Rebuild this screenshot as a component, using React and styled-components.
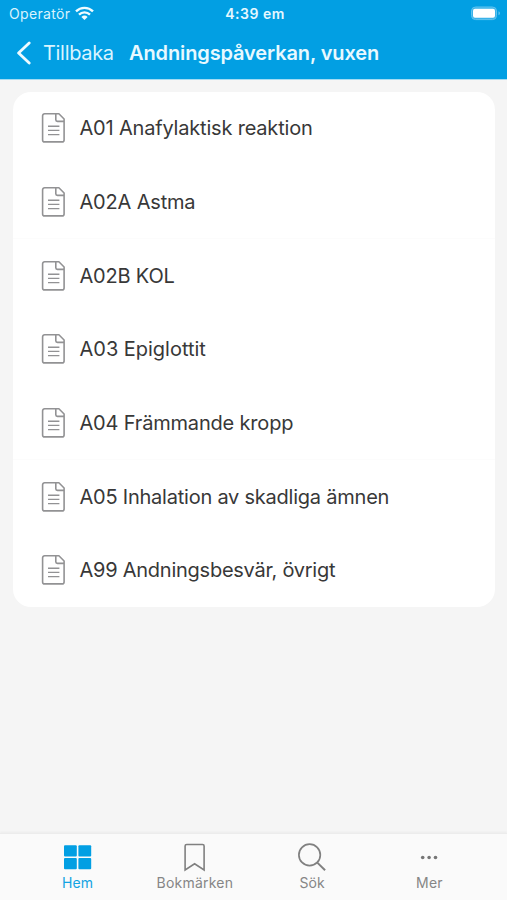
import React from 'react';
import styled, { createGlobalStyle } from 'styled-components';

const GlobalStyle = createGlobalStyle`
  * { box-sizing: border-box; }
  body { margin: 0; background: #f5f5f5; }
`;

const Screen = styled.div`
  width: 507px;
  height: 900px;
  display: flex;
  flex-direction: column;
  background: #f5f5f5;
  font-family: Inter, 'Liberation Sans', sans-serif;
  overflow: hidden;
`;

const Header = styled.header`
  height: 80px;
  flex: none;
  background: #029fe3;
  border-bottom: 1px solid #a5dcf3;
`;

const StatusBar = styled.div`
  height: 27px;
  display: grid;
  grid-template-columns: 1fr auto 1fr;
  align-items: center;
  padding: 0 6px 0 9px;
`;

const Carrier = styled.div`
  display: flex;
  align-items: center;
  gap: 5px;
  font-size: 14px;
  letter-spacing: 0.35px;
  color: #d9f3fd;
`;

const Clock = styled.div`
  font-size: 14px;
  font-weight: 600;
  letter-spacing: 0.5px;
  color: #e6f8ff;
`;

const Battery = styled.div`
  display: flex;
  justify-content: flex-end;
`;

const NavBar = styled.div`
  height: 51px;
  display: flex;
  align-items: center;
  padding-left: 16px;
`;

const BackButton = styled.button`
  display: flex;
  align-items: center;
  gap: 12px;
  width: 113px;
  padding: 0;
  border: 0;
  background: none;
  font: inherit;
  font-size: 20px;
  letter-spacing: ${(p) => p.$tracking}px;
  color: #d9f4ff;
  white-space: nowrap;
`;

const Title = styled.h1`
  margin: 0;
  font-size: 20px;
  font-weight: 600;
  letter-spacing: ${(p) => p.$tracking}px;
  color: #e8f9ff;
  white-space: nowrap;
`;

const Content = styled.main`
  flex: 1;
  padding: 12px 12.5px 0 13px;
`;

const Card = styled.ul`
  margin: 0;
  padding: 0;
  list-style: none;
  height: 514.5px;
  border-radius: 18px;
  background: #fff;
  overflow: hidden;
`;

const Row = styled.li`
  height: 73.67px;
  display: flex;
  align-items: center;
  gap: 13.5px;
  padding: 0 0 1px 28px;
  font-size: 20px;
  letter-spacing: ${(p) => p.$tracking}px;
  color: #383838;
  white-space: nowrap;
  box-shadow: ${(p) => (p.$divided ? 'inset 0 -1px #fcfcfc' : 'none')};
`;

const TabBar = styled.nav`
  height: 67px;
  flex: none;
  display: flex;
  justify-content: center;
  padding: 0 19px;
  background: #fafafa;
  border-top: 1px solid #ececec;
  box-shadow: 0 -1px 2px rgba(0, 0, 0, 0.04);
`;

const Tab = styled.div`
  width: 117.4px;
  display: flex;
  flex-direction: column;
  align-items: center;
  padding-top: 8px;
  font-size: 14px;
  line-height: 17px;
  letter-spacing: ${(p) => p.$tracking}px;
  color: ${(p) => (p.$active ? '#12a3e3' : '#868686')};
`;

const TabIcon = styled.svg`
  width: 32px;
  height: 32px;
  flex: none;
`;

const DocumentIcon = () => (
  <svg width="25" height="32" viewBox="0 0 25 32" fill="none" stroke="#929294" strokeWidth="1.6" strokeLinejoin="round">
    <path d="M3.6 1.8h14.3l5.2 5.2v20.9a2 2 0 0 1-2 2H3.6a2 2 0 0 1-2-2V3.8a2 2 0 0 1 2-2Z" />
    <path d="M14.8 2v5.8a1.6 1.6 0 0 0 1.6 1.6h6.6" />
    <path d="M7 14.2h11.4M7 18.4h11.4M7 22.6h11.4" strokeWidth="1.4" />
  </svg>
);

const WifiIcon = () => (
  <svg width="19" height="15" viewBox="0 0 19 15" fill="none" stroke="#effbff" strokeWidth="2.4">
    <path d="M1 5.3a12.2 12.2 0 0 1 17 0" />
    <path d="M4 8.6a7.9 7.9 0 0 1 11 0" />
    <path d="M9.5 14 6.4 10.9a4.4 4.4 0 0 1 6.2 0Z" fill="#effbff" stroke="none" />
  </svg>
);

const BatteryIcon = () => (
  <svg width="31" height="15" viewBox="0 0 31 15">
    <rect x="1.5" y="1" width="25" height="12.6" rx="4" fill="#39b2e9" stroke="#62c3ee" strokeWidth="1" />
    <rect x="3" y="2.8" width="22" height="9" rx="2" fill="#fff" />
    <path d="M28.5 5.3v4c2-.7 2-3.3 0-4Z" fill="#62c3ee" />
  </svg>
);

const BackIcon = () => (
  <svg width="15" height="24" viewBox="0 0 15 24" fill="none" stroke="#eefaff" strokeWidth="2.8" strokeLinecap="round" strokeLinejoin="round">
    <path d="M13.2 1.9 2.6 12l10.6 10.1" />
  </svg>
);

const icons = {
  home: (
    <g fill="#029fe3">
      <rect x="2" y="3.2" width="12.8" height="11.3" rx="1" />
      <rect x="16.4" y="3.2" width="12.8" height="11.3" rx="1" />
      <rect x="2" y="16" width="12.8" height="11.3" rx="1" />
      <rect x="16.4" y="16" width="12.8" height="11.3" rx="1" />
    </g>
  ),
  bookmark: (
    <path d="M6.1 28V4.1a1.6 1.6 0 0 1 1.6-1.6h15.8a1.6 1.6 0 0 1 1.6 1.6V28l-9.5-6.2Z" fill="none" stroke="#808080" strokeWidth="1.6" />
  ),
  search: (
    <g fill="none" stroke="#808080" strokeWidth="1.7">
      <circle cx="13.6" cy="12.9" r="10.7" />
      <path d="m21.3 20.6 7.8 7.6" strokeWidth="2" />
    </g>
  ),
  more: (
    <g fill="#767676">
      <circle cx="9.7" cy="15.5" r="1.8" />
      <circle cx="16.1" cy="15.5" r="1.8" />
      <circle cx="22.5" cy="15.5" r="1.8" />
    </g>
  ),
};

const documents = [
  { label: 'A01 Anafylaktisk reaktion', tracking: -0.19 },
  { label: 'A02A Astma', tracking: -0.18 },
  { label: 'A02B KOL', tracking: -0.2 },
  { label: 'A03 Epiglottit', tracking: -0.02 },
  { label: 'A04 Främmande kropp', tracking: -0.18 },
  { label: 'A05 Inhalation av skadliga ämnen', tracking: -0.23 },
  { label: 'A99 Andningsbesvär, övrigt', tracking: -0.25 },
].map((d, i) => ({ ...d, divided: i === 1 || i === 4 }));

const tabs = [
  { label: 'Hem', icon: 'home', active: true, tracking: 0.2 },
  { label: 'Bokmärken', icon: 'bookmark', tracking: 0.23 },
  { label: 'Sök', icon: 'search', tracking: 0.1 },
  { label: 'Mer', icon: 'more', tracking: 0.2 },
];

export default function App() {
  return (
    <Screen>
      <GlobalStyle />
      <Header>
        <StatusBar>
          <Carrier>
            <span>Operatör</span>
            <WifiIcon />
          </Carrier>
          <Clock>4:39 em</Clock>
          <Battery>
            <BatteryIcon />
          </Battery>
        </StatusBar>
        <NavBar>
          <BackButton $tracking={-0.32}>
            <BackIcon />
            <span>Tillbaka</span>
          </BackButton>
          <Title $tracking={-0.12}>Andningspåverkan, vuxen</Title>
        </NavBar>
      </Header>
      <Content>
        <Card>
          {documents.map((d) => (
            <Row key={d.label} $tracking={d.tracking} $divided={d.divided}>
              <DocumentIcon />
              <span>{d.label}</span>
            </Row>
          ))}
        </Card>
      </Content>
      <TabBar>
        {tabs.map((t) => (
          <Tab key={t.label} $active={t.active} $tracking={t.tracking}>
            <TabIcon viewBox="0 0 32 32">{icons[t.icon]}</TabIcon>
            <span>{t.label}</span>
          </Tab>
        ))}
      </TabBar>
    </Screen>
  );
}
